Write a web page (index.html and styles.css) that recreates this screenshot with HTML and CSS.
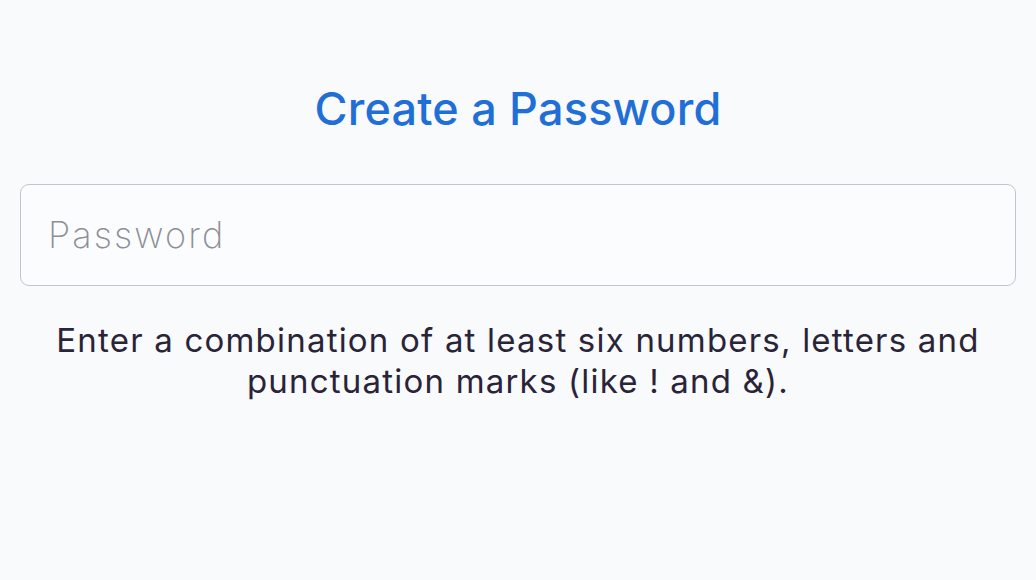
FILE: index.html
```html
<!DOCTYPE html>
<html>
<head>
<meta charset="utf-8">
<link rel="stylesheet" href="styles.css">
</head>
<body>
<main class="screen">
  <h1 class="title">Create a Password</h1>
  <div class="field"><span class="placeholder">Password</span></div>
  <p class="hint">Enter a combination of at least six numbers, letters and punctuation marks (like ! and &amp;).</p>
</main>
</body>
</html>
```
FILE: styles.css
```css
html, body { margin: 0; padding: 0; }
body {
  background: #f9fafc;
  font-family: Inter, "Noto Sans", sans-serif;
  width: 1036px;
  height: 580px;
  overflow: hidden;
}
.screen {
  display: flex;
  flex-direction: column;
  align-items: center;
  padding: 84px 20px 0 20px;
}
.title {
  margin: 0;
  font-size: 45px;
  font-weight: 500;
  color: #1f6fd6;
  line-height: 50px;
  letter-spacing: 0.2px;
}
.field {
  box-sizing: border-box;
  margin-top: 50px;
  width: 996px;
  height: 102px;
  border: 1.5px solid #c4c5ca;
  border-radius: 9px;
  background: #fbfcfd;
  display: flex;
  align-items: center;
  padding-left: 27px;
}
.placeholder {
  font-size: 36px;
  font-weight: 200;
  color: #8e8e97;
  letter-spacing: 2.1px;
}
.hint {
  margin: 34px 0 0 0;
  width: 990px;
  text-align: center;
  font-size: 33px;
  line-height: 41px;
  color: #2a2438;
  font-weight: 400;
  letter-spacing: 1.2px;
}
```
